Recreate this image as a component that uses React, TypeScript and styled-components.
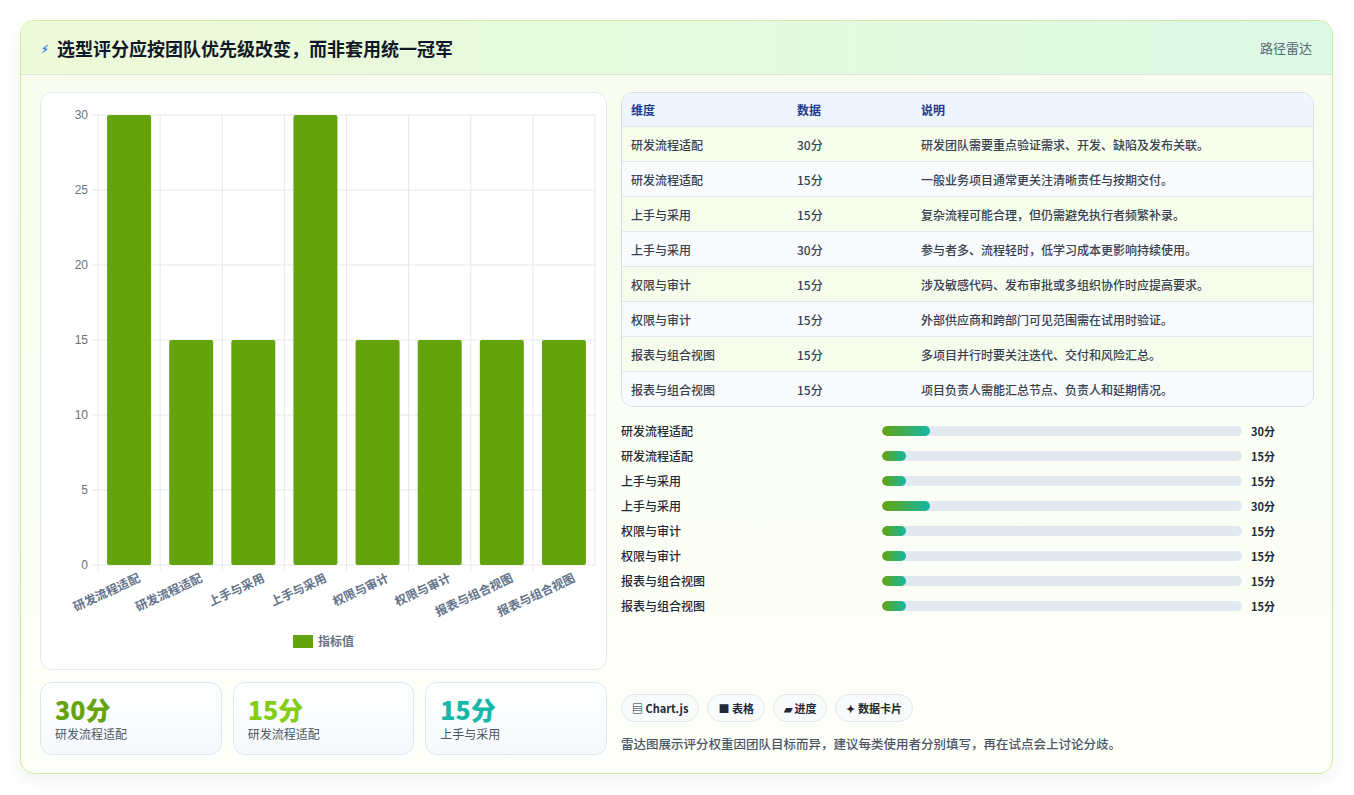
import React from "react";
import styled, { createGlobalStyle } from "styled-components";

const G = createGlobalStyle`
  html,body{margin:0;padding:0;background:#fff;}
  body{font-family:"Noto Sans CJK SC","Noto Sans",sans-serif;}
`;
const Page = styled.div`padding:20px 21px 20px 20px;`;
const Card = styled.div`
  height:754px;box-sizing:border-box;border:1px solid #cdeea0;border-radius:14px;
  background:linear-gradient(180deg,#f8fdee,#fdfff9);box-shadow:0 6px 18px rgba(0,0,0,.06);
  overflow:hidden;display:flex;flex-direction:column;
`;
const Header = styled.div`
  height:55px;box-sizing:border-box;display:flex;align-items:center;justify-content:space-between;
  padding:0 20px;background:linear-gradient(90deg,#eefad8,#dcf9e4);border-bottom:1px solid #dbe8d4;
`;
const Title = styled.h1`margin:0;font-size:18px;font-weight:700;color:#111827;display:flex;align-items:center;gap:8px;`;
const Bolt = styled.span`color:#3b82f6;font-size:11px;`;
const Tag = styled.span`font-size:13px;color:#5b6678;`;
const Body = styled.div`flex:1;display:grid;grid-template-columns:567px 1fr;gap:14px;padding:17px 18px 18px 19px;`;
const Left = styled.div`display:flex;flex-direction:column;gap:12px;`;
const ChartBox = styled.div`height:578px;box-sizing:border-box;border:1px solid #e2e8f0;border-radius:12px;background:#fff;`;
const Stats = styled.div`display:grid;grid-template-columns:repeat(3,1fr);gap:11px;`;
const Stat = styled.div`height:73px;box-sizing:border-box;border:1px solid #dbe7f3;border-radius:12px;background:linear-gradient(180deg,#fff,#f5f9fd);padding:10px 14px;`;
const StatNum = styled.div<{c:string}>`font-size:25px;font-weight:800;color:${p=>p.c};line-height:32px;`;
const StatLbl = styled.div`font-size:12px;color:#4b5563;`;
const Right = styled.div`display:flex;flex-direction:column;`;
const Table = styled.div`border:1px solid #d6dde8;border-radius:12px;overflow:hidden;background:#fff;`;
const Row = styled.div<{bg:string;head?:boolean}>`
  display:grid;grid-template-columns:166px 124px 1fr;align-items:center;padding:0 9px;
  height:${p=>p.head?33:35}px;background:${p=>p.bg};border-top:${p=>p.head?"none":"1px solid #e3e8ef"};
  font-size:12px;font-weight:${p=>p.head?600:500};color:${p=>p.head?"#1e3a8a":"#374151"};box-sizing:border-box;
`;
const Bars = styled.div`display:flex;flex-direction:column;margin-top:11px;`;
const BarRow = styled.div`display:grid;grid-template-columns:261px 360px 1fr;align-items:center;height:25px;font-size:12px;color:#1f2937;font-weight:500;`;
const Track = styled.div`height:10px;border-radius:5px;background:#e2e8f0;overflow:hidden;`;
const Fill = styled.div`height:100%;border-radius:5px;background:linear-gradient(90deg,#65a30d,#14b8a6);`;
const Val = styled.span`padding-left:9px;font-weight:700;font-size:11px;`;
const Foot = styled.div`margin-top:auto;`;
const Chips = styled.div`display:flex;gap:8px;`;
const Chip = styled.span`height:28px;box-sizing:border-box;display:inline-flex;align-items:center;gap:4px;padding:0 10px;border:1px solid #e2e8f0;border-radius:14px;background:#f8fafc;font-size:11px;font-weight:700;color:#1f2937;`;
const Note = styled.p`margin:12px 0 2px;font-size:12.5px;color:#4b5563;font-weight:500;`;

const data: [string, number, string][] = [
  ["研发流程适配",30,"研发团队需要重点验证需求、开发、缺陷及发布关联。"],
  ["研发流程适配",15,"一般业务项目通常更关注清晰责任与按期交付。"],
  ["上手与采用",15,"复杂流程可能合理，但仍需避免执行者频繁补录。"],
  ["上手与采用",30,"参与者多、流程轻时，低学习成本更影响持续使用。"],
  ["权限与审计",15,"涉及敏感代码、发布审批或多组织协作时应提高要求。"],
  ["权限与审计",15,"外部供应商和跨部门可见范围需在试用时验证。"],
  ["报表与组合视图",15,"多项目并行时要关注迭代、交付和风险汇总。"],
  ["报表与组合视图",15,"项目负责人需能汇总节点、负责人和延期情况。"],
];

function Chart(){
  const x0=57, x1=554, y0=22, y1=472, w=(x1-x0)/8;
  const ticks=[0,5,10,15,20,25,30];
  return (
    <svg width="566" height="578" style={{display:"block"}}>
      {ticks.map(t=>{const y=y1-(t/30)*(y1-y0);return <g key={t}>
        <line x1={x0-6} x2={x1} y1={y} y2={y} stroke="#e5e7eb"/>
        <text x={x0-10} y={y+4} textAnchor="end" fontSize="12" fill="#6b7280" fontFamily="Liberation Sans">{t}</text></g>})}
      {data.map((_,i)=><line key={i} x1={x0+i*w} x2={x0+i*w} y1={y0} y2={y1+6} stroke="#e5e7eb"/>)}
      <line x1={x1} x2={x1} y1={y0} y2={y1} stroke="#e5e7eb"/>
      {data.map(([n,v],i)=>{const h=(v/30)*(y1-y0);const cx=x0+i*w+w/2;return <g key={i}>
        <rect x={cx-22} y={y1-h} width={44} height={h} rx={2} fill="#65a30d"/>
        <text transform={`translate(${cx+12},${y1+16}) rotate(-25)`} textAnchor="end" fontSize="12" fontWeight="700" fill="#64748b">{n}</text></g>})}
      <rect x={252} y={542} width={20} height={13} fill="#65a30d"/>
      <text x={277} y={553} fontSize="12" fontWeight="600" fill="#6b7280">指标值</text>
    </svg>
  );
}

export default function App(){
  return <Page><G/><Card>
    <Header><Title><Bolt>⚡︎</Bolt>选型评分应按团队优先级改变，而非套用统一冠军</Title><Tag>路径雷达</Tag></Header>
    <Body>
      <Left>
        <ChartBox><Chart/></ChartBox>
        <Stats>
          <Stat><StatNum c="#65a30d">30分</StatNum><StatLbl>研发流程适配</StatLbl></Stat>
          <Stat><StatNum c="#84cc16">15分</StatNum><StatLbl>研发流程适配</StatLbl></Stat>
          <Stat><StatNum c="#14b8a6">15分</StatNum><StatLbl>上手与采用</StatLbl></Stat>
        </Stats>
      </Left>
      <Right>
        <Table>
          <Row head bg="#eef5fd"><span>维度</span><span>数据</span><span>说明</span></Row>
          {data.map(([a,b,c],i)=><Row key={i} bg={i%2?"#f8fafc":"#f7fdec"}><span>{a}</span><span>{b}分</span><span>{c}</span></Row>)}
        </Table>
        <Bars>
          {data.map(([a,b],i)=><BarRow key={i}><span>{a}</span><Track><Fill style={{width:`${b/225*100}%`}}/></Track><Val>{b}分</Val></BarRow>)}
        </Bars>
        <Foot>
          <Chips><Chip>▤ Chart.js</Chip><Chip>■ 表格</Chip><Chip>▰ 进度</Chip><Chip>✦ 数据卡片</Chip></Chips>
          <Note>雷达图展示评分权重因团队目标而异，建议每类使用者分别填写，再在试点会上讨论分歧。</Note>
        </Foot>
      </Right>
    </Body>
  </Card></Page>;
}
